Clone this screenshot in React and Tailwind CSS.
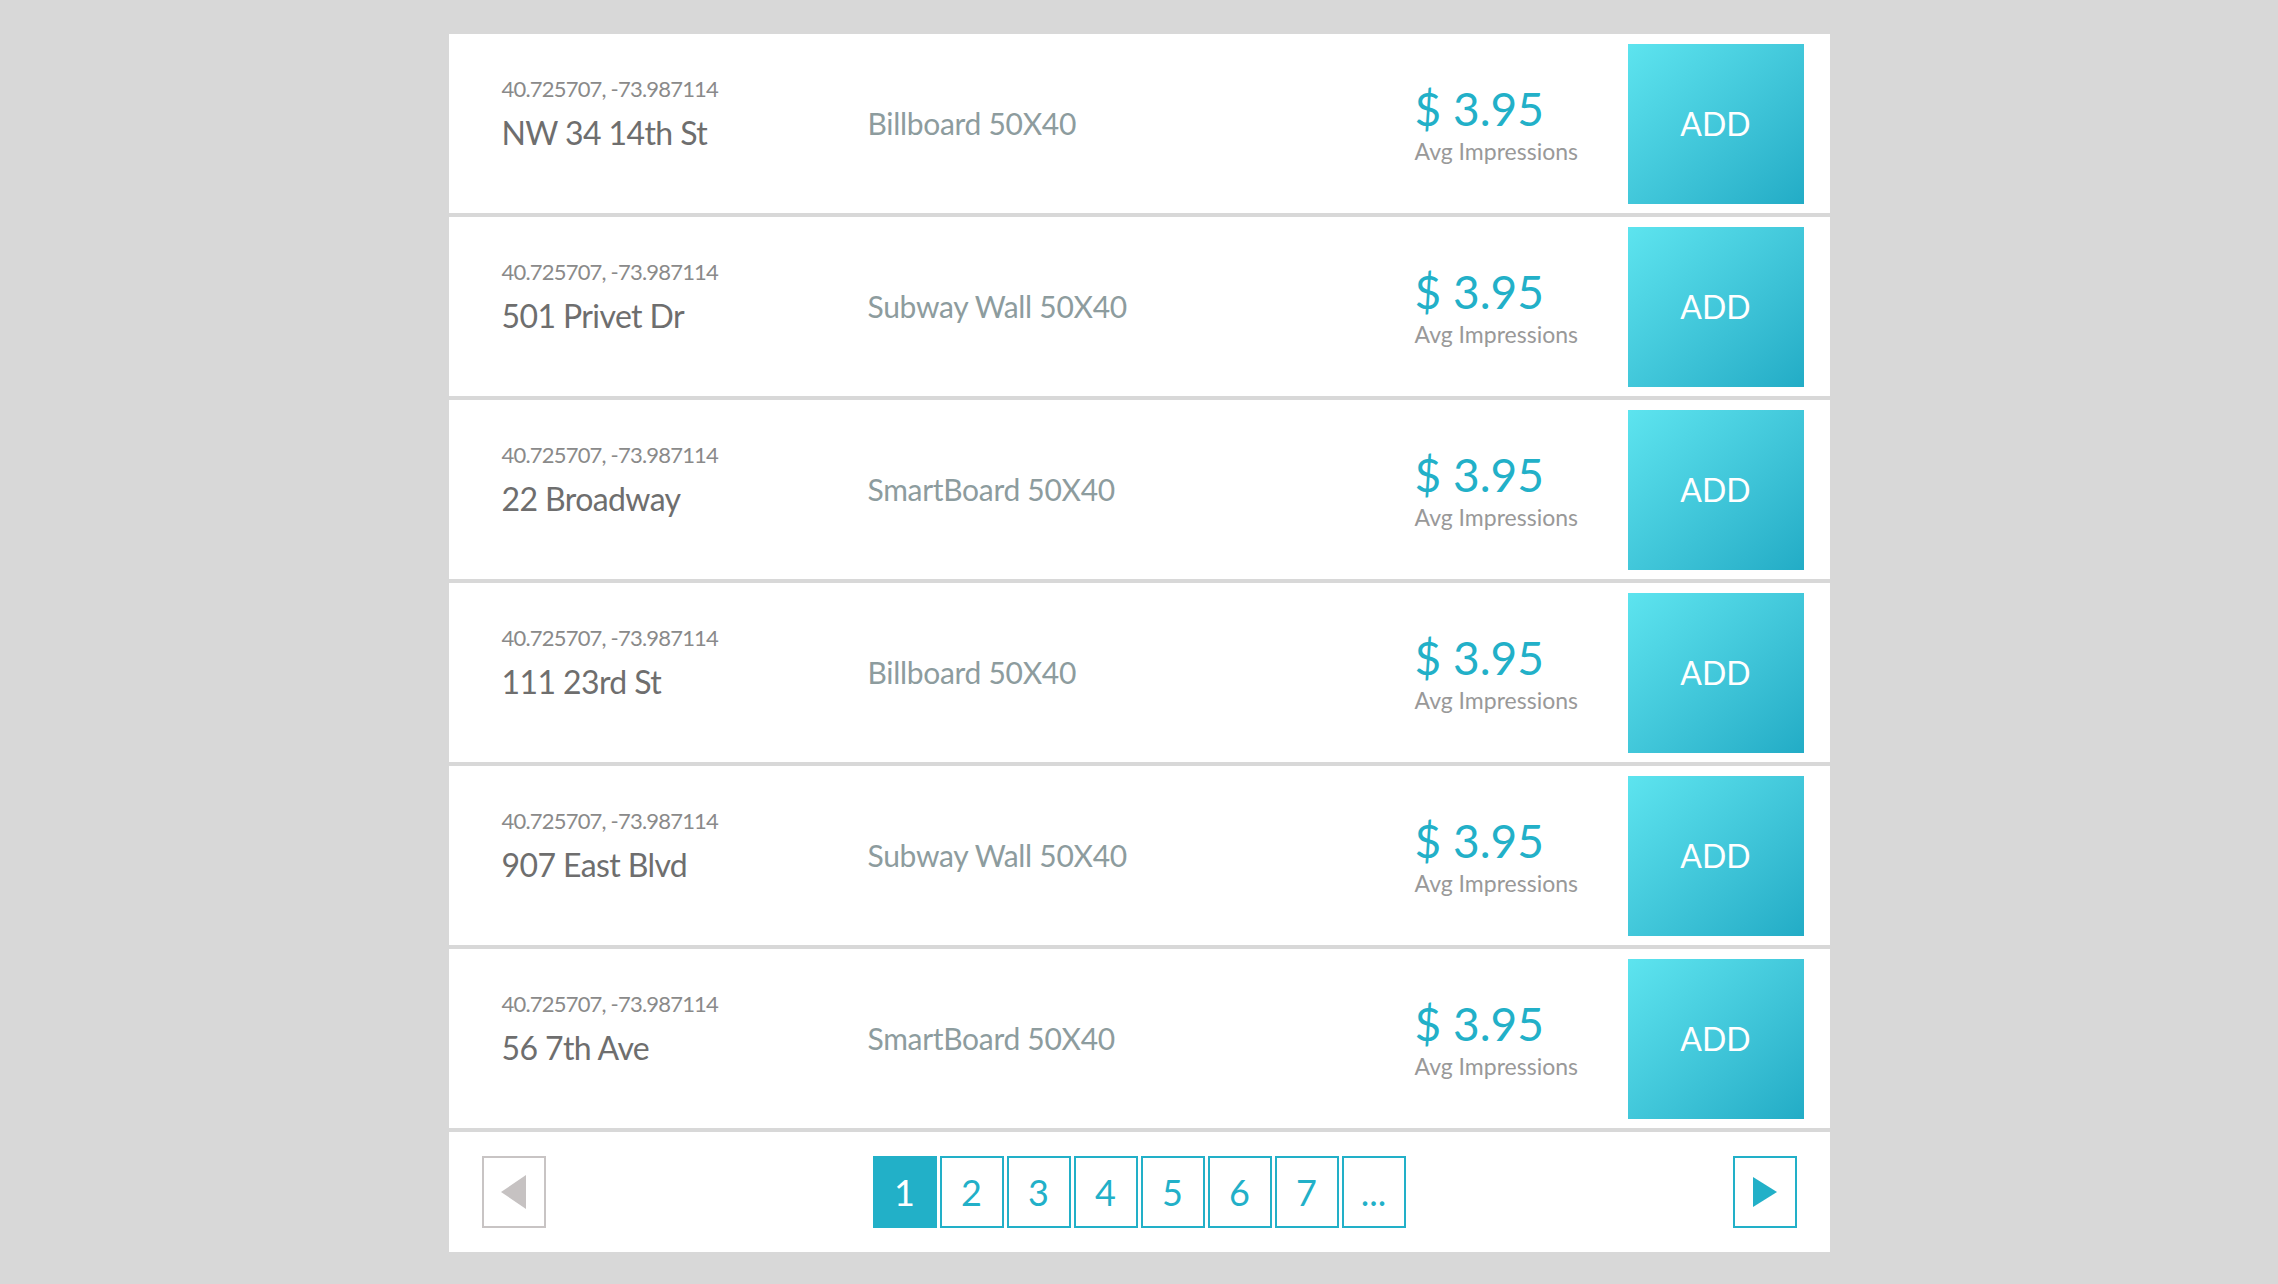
import React from 'react';

const rows = [
  { addr: 'NW 34 14th St', type: 'Billboard 50X40' },
  { addr: '501 Privet Dr', type: 'Subway Wall 50X40' },
  { addr: '22 Broadway', type: 'SmartBoard 50X40' },
  { addr: '111 23rd St', type: 'Billboard 50X40' },
  { addr: '907 East Blvd', type: 'Subway Wall 50X40' },
  { addr: '56 7th Ave', type: 'SmartBoard 50X40' },
];

const pages = ['1', '2', '3', '4', '5', '6', '7', '...'];

function Row({ addr, type }) {
  return (
    <div className="h-[179px] bg-white flex items-center">
      <div className="w-[419px] pl-[53px] flex flex-col -mt-[19px]">
        <span className="text-[22px] leading-[26px] text-[#8a8a8a] tracking-[-0.8px]">40.725707, -73.987114</span>
        <span className="text-[32px] leading-[40px] text-[#6e6e6e] mt-[11px] tracking-[-0.6px]">{addr}</span>
      </div>
      <div className="flex-1 text-[30px] text-[#8d9c9e] tracking-[-0.3px]">{type}</div>
      <div className="w-[213px] flex flex-col">
        <span className="text-[46px] leading-[52px] text-[#22b0c8]">$ 3.95</span>
        <span className="text-[23px] leading-[28px] text-[#999999] mt-[2px]">Avg Impressions</span>
      </div>
      <button className="w-[176px] h-[160px] mr-[26px] bg-gradient-to-br from-[#5de4ef] to-[#22acc6] text-white text-[32px] flex items-center justify-center">
        ADD
      </button>
    </div>
  );
}

export default function App() {
  return (
    <div className="min-h-screen bg-[#d8d8d8] pt-[34px] pb-[32px]" style={{ fontFamily: 'Lato, "Open Sans", sans-serif' }}>
      <div className="w-[1381px] mx-auto flex flex-col gap-[4px]">
        {rows.map((r, i) => (
          <Row key={i} {...r} />
        ))}
        <div className="h-[120px] bg-white flex items-center justify-between px-[33px]">
          <button className="w-[64px] h-[72px] border-2 border-[#c8c4c4] flex items-center justify-center">
            <svg width="26" height="34" viewBox="0 0 26 34">
              <polygon points="25,0 25,34 0,17" fill="#c6c2c2" />
            </svg>
          </button>
          <div className="flex gap-[3px]">
            {pages.map((p, i) => (
              <button
                key={p}
                className={`w-[64px] h-[72px] border-2 border-[#22b0c8] flex items-center justify-center text-[36px] ${i === 0 ? 'bg-[#22b0c8] text-white' : 'bg-white text-[#22b0c8]'}`}
              >
                {p}
              </button>
            ))}
          </div>
          <button className="w-[64px] h-[72px] border-2 border-[#22b0c8] flex items-center justify-center">
            <svg width="26" height="30" viewBox="0 0 26 30">
              <polygon points="1,0 1,30 25,15" fill="#22b0c8" />
            </svg>
          </button>
        </div>
      </div>
    </div>
  );
}
